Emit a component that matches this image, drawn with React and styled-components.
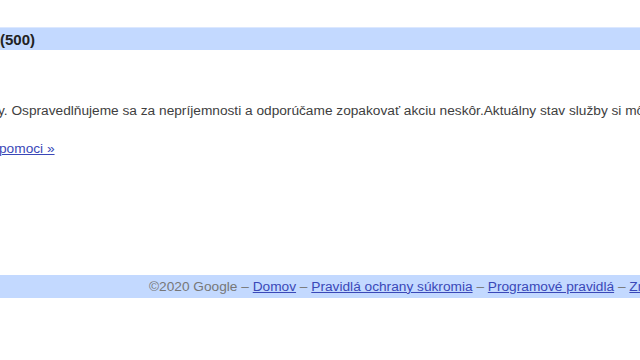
import styled, { createGlobalStyle } from "styled-components";

const GlobalStyle = createGlobalStyle`
  html, body {
    margin: 0;
    padding: 0;
    background: #ffffff;
    overflow: hidden;
  }
  body {
    font-family: "Liberation Sans", Arial, sans-serif;
    font-size: 13.7px;
    color: #333333;
  }
`;

function App() {
  return (
    <Page>
      <GlobalStyle />
      <TitleBar>
        <Title>(500)</Title>
      </TitleBar>

      <Message>
        y. Ospravedlňujeme sa za nepríjemnosti a odporúčame zopakovať akciu
        neskôr.Aktuálny stav služby si môžete overiť na stránke stavu služieb.
      </Message>

      <HelpLine>
        <Link href="#">pomoci »</Link>
      </HelpLine>

      <Footer>
        <FooterText>
          ©2020 Google – <Link href="#">Domov</Link> –{" "}
          <Link href="#">Pravidlá ochrany súkromia</Link> –{" "}
          <Link href="#">Programové pravidlá</Link> –{" "}
          <Link href="#">Zmluvné podmienky</Link>
        </FooterText>
      </Footer>
    </Page>
  );
}

export default App;

const Page = styled.div`
  width: 640px;
  height: 360px;
  overflow: hidden;
  padding-top: 27px;
  box-sizing: border-box;
`;

const TitleBar = styled.div`
  height: 23px;
  background-color: #c3d9ff;
  border-top: 1px solid #dce8ff;
  box-sizing: border-box;
  display: flex;
  align-items: center;
`;

const Title = styled.h1`
  margin: 0;
  font-size: 15px;
  font-weight: bold;
  color: #222222;
  line-height: 1;
`;

const Message = styled.p`
  margin: 53px 0 0;
  line-height: 16px;
  white-space: nowrap;
  overflow: hidden;
  text-indent: -2px;
  color: #404040;
`;

const HelpLine = styled.p`
  margin: 22px 0 0;
  line-height: 16px;
  white-space: nowrap;
  text-indent: -1px;
`;

const Link = styled.a`
  color: #3a48b8;
  text-decoration: underline;
`;

const Footer = styled.div`
  margin-top: 118px;
  height: 23px;
  background-color: #c3d9ff;
  display: flex;
  align-items: center;
  padding-left: 149px;
  overflow: hidden;
  white-space: nowrap;
`;

const FooterText = styled.div`
  color: #777777;
  line-height: 16px;
`;
